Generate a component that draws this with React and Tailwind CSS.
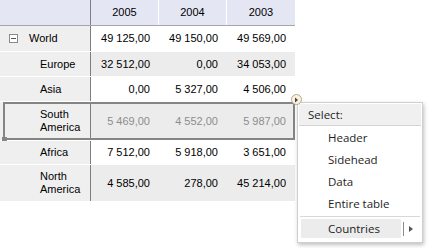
import React from "react";

const rows = [
  { name: "World", vals: ["49 125,00", "49 150,00", "49 569,00"], h: "h-[26px]", top: true },
  { name: "Europe", vals: ["32 512,00", "0,00", "34 053,00"], h: "h-[25px]", alt: true },
  { name: "Asia", vals: ["0,00", "5 327,00", "4 506,00"], h: "h-[25px]" },
  { name: ["South", "America"], vals: ["5 469,00", "4 552,00", "5 987,00"], h: "h-[39px]", alt: true, sel: true },
  { name: "Africa", vals: ["7 512,00", "5 918,00", "3 651,00"], h: "h-[24px]" },
  { name: ["North", "America"], vals: ["4 585,00", "278,00", "45 214,00"], h: "h-[36px]", alt: true, last: true },
];

const Row = ({ row }) => (
  <div className={`relative flex ${row.h} ${row.last ? "" : "border-b border-white"}`}>
    <div className="w-[91px] shrink-0 flex items-center bg-[#efefef] border-r border-[#7f7f7f]">
      {row.top ? (
        <div className="flex items-center pl-[9px]">
          <span className="w-[9px] h-[9px] border border-[#8a8a8a] flex items-center justify-center bg-white">
            <span className="w-[5px] h-px bg-[#555]" />
          </span>
          <span className="ml-[11px]">{row.name}</span>
        </div>
      ) : (
        <div className="pl-[40px] leading-[13px]">
          {Array.isArray(row.name) ? row.name.map((n) => <div key={n}>{n}</div>) : row.name}
        </div>
      )}
    </div>
    {row.vals.map((v, i) => (
      <div
        key={i}
        className={`w-[68px] shrink-0 flex items-center justify-end pr-[9px] ${row.alt ? "bg-[#ececec]" : "bg-white"} ${row.sel ? "text-[#8c8c8c]" : ""}`}
      >
        {v}
      </div>
    ))}
    {row.sel && (
      <>
        <div className="absolute left-[3px] top-0 w-[292px] h-[38px] border-2 border-[#858585]" />
        <div className="absolute left-[2px] top-[35px] w-[5px] h-[5px] bg-[#858585]" />
      </>
    )}
  </div>
);

const App = () => {
  return (
    <div className="relative w-[442px] h-[248px] bg-white overflow-hidden text-[11px] text-black font-['Liberation_Sans',Arial,sans-serif]">
      <div className="w-[295px] flex flex-col">
        <div className="flex h-[26px] bg-[#e4e6f4] border-b border-[#a6a6a6]">
          <div className="w-[91px] shrink-0 border-r border-[#7f7f7f]" />
          {["2005", "2004", "2003"].map((y, i) => (
            <div
              key={y}
              className={`w-[68px] shrink-0 flex items-center justify-center ${i < 2 ? "border-r border-white" : ""}`}
            >
              {y}
            </div>
          ))}
        </div>
        {rows.map((r, i) => (
          <Row key={i} row={r} />
        ))}
      </div>

      <div className="absolute left-[291px] top-[94px] w-[11px] h-[11px] rounded-full bg-[#fbf1dc] border border-[#b7a98a] flex items-center justify-center z-10">
        <svg width="5" height="6" viewBox="0 0 5 6">
          <path d="M1 0.5 L4 3 L1 5.5 Z" fill="#444" />
        </svg>
      </div>

      <div className="absolute left-[297px] top-[102px] w-[126px] h-[141px] bg-white border border-[#cfcfcf] shadow-[1px_2px_4px_rgba(0,0,0,0.25)] font-['Open_Sans','Noto_Sans',sans-serif] text-[11.5px] text-[#1e1e1e]">
        <div className="mx-px mt-px h-[22px] bg-[#f0f0f0] flex items-center pl-[9px] border-b border-[#d4d4d4]">
          Select:
        </div>
        <div className="flex flex-col pt-[1px]">
          {["Header", "Sidehead", "Data", "Entire table"].map((t) => (
            <div key={t} className="h-[22px] flex items-center pl-[30px]">
              {t}
            </div>
          ))}
        </div>
        <div className="mx-[2px] mt-[1px] h-px bg-[#d8d8d8]" />
        <div className="flex items-center mt-[2px] ml-[3px] h-[19px]">
          <div className="w-[100px] h-full bg-[#ececec] flex items-center pl-[27px]">Countries</div>
          <div className="ml-[2px] w-px h-[14px] bg-[#8c8c8c]" />
          <svg className="ml-[5px]" width="4" height="6" viewBox="0 0 4 6">
            <path d="M0 0 L4 3 L0 6 Z" fill="#555" />
          </svg>
        </div>
      </div>
    </div>
  );
};

export default App;
